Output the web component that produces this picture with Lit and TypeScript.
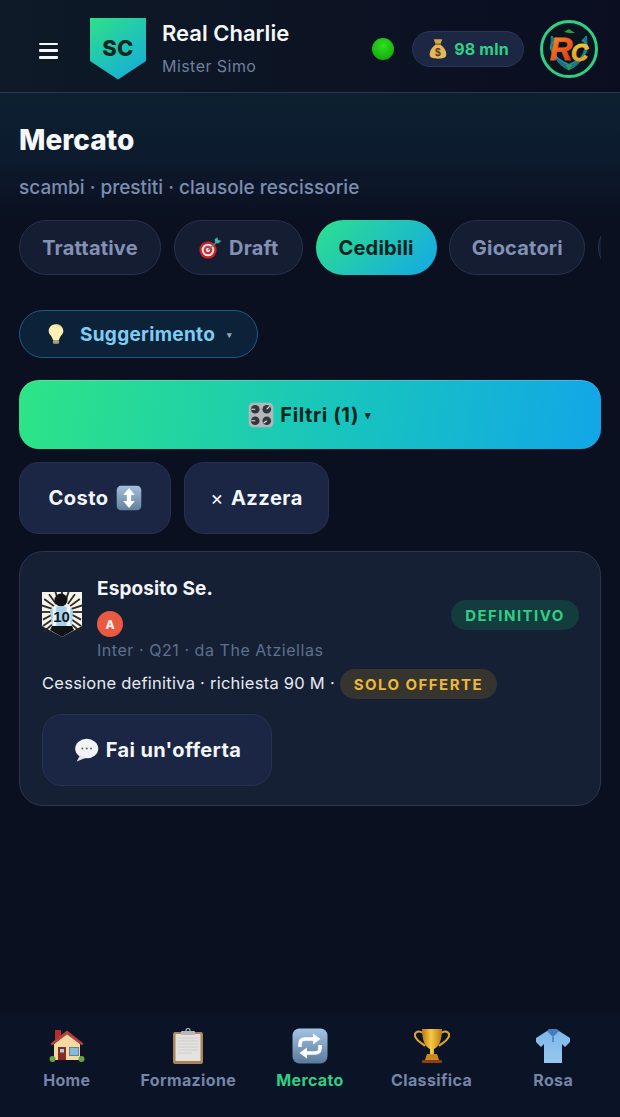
import { LitElement, html, css, svg } from "lit";
import { customElement } from "lit/decorators.js";

const ic = (size: number, body: unknown, vb = "0 0 36 36") =>
  html`<svg class="ic" width=${size} height=${size} viewBox=${vb}>${body}</svg>`;

const bag = svg`
  <path d="M11 2 L25 2 L22 10 L14 10 Z" fill="#d9a845"/>
  <rect x="13.5" y="9" width="9" height="3" rx="1" fill="#8a5a1c"/>
  <path d="M14 11 C6 16 3 25 5 30 C7 35 29 35 31 30 C33 25 30 16 22 11 Z" fill="#e3b85c"/>
  <text x="18" y="30" text-anchor="middle" font-family="Liberation Sans" font-weight="700" font-size="17" fill="#5a3c12">$</text>`;

const target = svg`
  <ellipse cx="15" cy="21" rx="13" ry="13" fill="#c8202a"/>
  <ellipse cx="15" cy="21" rx="9.5" ry="9.5" fill="#f3e6e0"/>
  <ellipse cx="15" cy="21" rx="6.5" ry="6.5" fill="#d22a30"/>
  <ellipse cx="15" cy="21" rx="3.2" ry="3.2" fill="#f3e6e0"/>
  <path d="M15 21 L29 8" stroke="#5d7f88" stroke-width="2.4"/>
  <path d="M26 11 L25 5 L29 2 L30 6 L35 7 L31 11 Z" fill="#3fb4a8"/>`;

const bulb = svg`
  <path d="M18 2 C10 2 6 8 6 13 C6 19 12 21 13 28 L23 28 C24 21 30 19 30 13 C30 8 26 2 18 2 Z" fill="#fdf0b4"/>
  <path d="M18 2 C24 2 29 7 29 13 C29 9 24 4 18 4 Z" fill="#e9d27a"/>
  <rect x="13" y="28" width="10" height="6" rx="2" fill="#a99e86"/>`;

const knob = (x: number, y: number, a: number) => svg`
  <circle cx=${x} cy=${y} r="6" fill="#33373d"/>
  <path d="M${x} ${y} L${x + 5.5 * Math.cos(a)} ${y + 5.5 * Math.sin(a)}" stroke="#e8e8e8" stroke-width="1.6"/>`;
const knobs = svg`
  <rect x="1" y="1" width="34" height="34" rx="6" fill="#b4b6b9"/>
  ${knob(10, 10, 3.14)}${knob(26, 10, -0.8)}${knob(10, 26, 3.14)}${knob(26, 26, 2.5)}`;

const updown = svg`
  <defs><linearGradient id="ud" x1="0" y1="0" x2="0" y2="1"><stop offset="0" stop-color="#a4bfdc"/><stop offset="1" stop-color="#64809f"/></linearGradient></defs>
  <rect x="1" y="1" width="34" height="34" rx="6" fill="url(#ud)"/>
  <path d="M18 4 L26 14 L21 14 L21 22 L26 22 L18 32 L10 22 L15 22 L15 14 L10 14 Z" fill="#fff"/>`;

const speech = svg`
  <ellipse cx="19" cy="16" rx="16" ry="13.5" fill="#f2f3f5"/>
  <path d="M10 25 L5 34 L17 29 Z" fill="#e3e5e8"/>
  <circle cx="13" cy="16" r="1.3" fill="#55595f"/><circle cx="19" cy="16" r="1.3" fill="#55595f"/><circle cx="25" cy="16" r="1.3" fill="#55595f"/>`;

const house = svg`
  <rect x="6" y="2" width="6" height="10" fill="#b32e2c"/>
  <path d="M5 16 L18 5 L31 16 L31 32 L5 32 Z" fill="#f4d9a2"/>
  <path d="M1.5 15.5 L18 2.5 L34.5 15.5 L33 17.5 L18 6.5 L3 17.5 Z" fill="#b5413a"/>
  <rect x="9" y="19" width="8" height="13" fill="#8a2a22"/>
  <rect x="11" y="21" width="4" height="3.5" fill="#9ed0e8"/>
  <rect x="20" y="19" width="10" height="9" fill="#6b7f8e"/><rect x="21" y="20" width="8" height="7" fill="#7fbde0"/>
  <circle cx="3.5" cy="31" r="3" fill="#6aa33f"/><circle cx="32.5" cy="31" r="3" fill="#6aa33f"/>`;

const clipboard = svg`
  <rect x="3" y="4" width="30" height="32" rx="2" fill="#a9835a"/>
  <rect x="5.5" y="6" width="25" height="27" fill="#e4e2de"/>
  <path d="M8 10h20M8 13h20M8 16h20M8 19h20M8 22h20M8 25h14" stroke="#cfcdc9" stroke-width="1.2"/>
  <rect x="11" y="3" width="14" height="4" rx="1" fill="#b8b8bc"/>
  <circle cx="18" cy="2.5" r="2" fill="none" stroke="#b8b8bc" stroke-width="1.2"/>`;

const repeat = svg`
  <defs><linearGradient id="rp" x1="0" y1="0" x2="0" y2="1"><stop offset="0" stop-color="#a4c4e6"/><stop offset="1" stop-color="#5b7b9b"/></linearGradient></defs>
  <rect x="0.5" y="0.5" width="35" height="35" rx="7" fill="url(#rp)"/>
  <path d="M8 19 L8 16 C8 12.5 10 11 13 11 L22 11" fill="none" stroke="#fff" stroke-width="3.6"/>
  <path d="M21 5.5 L28.5 11 L21 16.5 Z" fill="#fff"/>
  <path d="M28 17 L28 20 C28 23.5 26 25 23 25 L14 25" fill="none" stroke="#fff" stroke-width="3.6"/>
  <path d="M15 19.5 L7.5 25 L15 30.5 Z" fill="#fff"/>`;

const trophy = svg`
  <defs><linearGradient id="tr" x1="0" y1="0" x2="1" y2="0"><stop offset="0" stop-color="#b87a10"/><stop offset=".45" stop-color="#f7ca45"/><stop offset="1" stop-color="#b87a10"/></linearGradient></defs>
  <path d="M9 5 C3 1 -1 6 2 10 C4 14 8 15 11 18" fill="none" stroke="#e0a52a" stroke-width="2"/>
  <path d="M27 5 C33 1 37 6 34 10 C32 14 28 15 25 18" fill="none" stroke="#e0a52a" stroke-width="2"/>
  <path d="M8 1 L28 1 C28 12 25 19 20 21 L20 27 L16 27 L16 21 C11 19 8 12 8 1 Z" fill="url(#tr)"/>
  <path d="M13 26 L23 26 L25 32 L11 32 Z" fill="#c98a1c"/>
  <rect x="8" y="32" width="20" height="3" rx="1" fill="#8f3d12"/>`;

const shirt = svg`
  <defs><linearGradient id="sh" x1="0" y1="0" x2="0" y2="1"><stop offset="0" stop-color="#7fb8ea"/><stop offset="1" stop-color="#96c8ef"/></linearGradient></defs>
  <path d="M12 3 L1 10 L1 14 L6 19 L9 16 L9 35 L27 35 L27 16 L30 19 L35 14 L35 10 L24 3 Z" fill="url(#sh)"/>
  <path d="M12 3 L18 9 L24 3 L22 1 L14 1 Z" fill="#3f7fbe"/>
  <path d="M18 9 L18 14" stroke="#3f7fbe" stroke-width="1.5"/>`;

const rays = Array.from({ length: 11 }, (_, i) => {
  const a = Math.PI + (i * Math.PI) / 10;
  const c = Math.cos(a), s = Math.sin(a);
  return svg`<path d="M${20 + 10 * c} ${20 + 10 * s} L${20 + 22 * c} ${20 + 22 * s}" stroke="#2c281e" stroke-width="1.8"/>`;
});
const rays2 = [0.2, 0.55, 0.9].flatMap((d) => [
  svg`<path d="M10 ${20 + d * 14} L1 ${24 + d * 18}" stroke="#2c281e" stroke-width="1.8"/>`,
  svg`<path d="M30 ${20 + d * 14} L39 ${24 + d * 18}" stroke="#2c281e" stroke-width="1.8"/>`,
]);

const clubLogo = html`<svg class="club" width="40" height="46" viewBox="0 0 40 46">
  <path d="M0 0 H40 V34 L20 45 L0 34 Z" fill="#f6f3ec"/>
  ${rays}${rays2}
  <circle cx="19" cy="8" r="6.5" fill="#101216"/>
  <path d="M8 18 C11 13 27 13 31 18 L30 34 L10 34 Z" fill="#a5d2ea"/>
  <path d="M12.5 15 V34 M26.5 15 V34" stroke="#eef6fa" stroke-width="3.5"/>
  <text x="19.5" y="30" text-anchor="middle" font-family="Liberation Sans" font-weight="700" font-size="15" fill="#14181e">10</text>
  <path d="M10 34 H30 L32 38 L20 45 L8 38 Z" fill="#101216"/>
</svg>`;

const feathers = [0, 1, 2, 3, 4].map((i) => svg`
  <path d="M30 ${50 - i} C${20 - i * 2} ${46 - i * 2} ${11 - i} ${34 - i * 2} ${13 + i} ${17 + i}" fill="none" stroke=${i % 2 ? "#1a5f86" : "#1f8a90"} stroke-width="2"/>
  <path d="M30 ${50 - i} C${40 + i * 2} ${46 - i * 2} ${49 + i} ${34 - i * 2} ${47 - i} ${17 + i}" fill="none" stroke=${i % 2 ? "#1a5f86" : "#1f8a90"} stroke-width="2"/>`);

const avatar = html`<svg class="avatar" width="60" height="60" viewBox="0 0 60 60">
  <defs>
    <linearGradient id="rcg" x1="0" y1="0" x2="0.6" y2="1"><stop offset="0" stop-color="#f79a28"/><stop offset=".55" stop-color="#f0601c"/><stop offset="1" stop-color="#d93a18"/></linearGradient>
    <linearGradient id="ccg" x1="0" y1="0" x2="0" y2="1"><stop offset="0" stop-color="#f5cb3a"/><stop offset="1" stop-color="#dd9a22"/></linearGradient>
  </defs>
  <circle cx="30" cy="30" r="27.5" fill="#0a141e" stroke="#2fd085" stroke-width="3"/>
  ${feathers}
  <path d="M25 13 L30 10 L36 14 L30 14 Z" fill="#2f9a4a"/>
  <path d="M27 46 L30 52 L33 46 Z" fill="#2f9a4a"/>
  <text x="32" y="42" font-family="Liberation Sans" font-style="italic" font-weight="700" font-size="24" fill="url(#ccg)" stroke="url(#ccg)" stroke-width=".8">C</text>
  <text x="11" y="41" font-family="Liberation Sans" font-style="italic" font-weight="700" font-size="31" fill="url(#rcg)" stroke="url(#rcg)" stroke-width=".8">R</text>
</svg>`;

@customElement("app-root")
export class AppRoot extends LitElement {
  static styles = css`
    :host { display: flex; flex-direction: column; min-height: 100vh; background: #0a1020; color: #f3f6fb;
      font-family: Inter, "Noto Sans", "Liberation Sans", sans-serif; }
    * { box-sizing: border-box; }
    .ic, .club, .avatar { display: block; flex: none; }

    .top { height: 93px; display: flex; align-items: center; border-bottom: 1px solid #2b3650;
      background: linear-gradient(90deg, #0e1a28 0%, #0c1424 50%, #0a0e20 100%); padding: 6px 21px 0 39px; }
    .burger { width: 19px; height: 16px; display: flex; flex-direction: column; justify-content: space-between; margin-top: 3px; }
    .burger i { display: block; height: 2.6px; background: #f6f7fa; border-radius: 1px; }
    .shield { width: 56px; height: 62px; margin: -1px 0 0 32px; display: flex; align-items: center; justify-content: center;
      background: linear-gradient(145deg, #2ee08a, #13a8e0); clip-path: polygon(0 0, 100% 0, 100% 70%, 50% 100%, 0 70%);
      color: #07281f; font-size: 22px; font-weight: 800; padding-bottom: 2px; letter-spacing: .4px; }
    .who { margin-left: 16px; display: flex; flex-direction: column; gap: 9px; flex: 1; margin-top: -4px; }
    .who b { font-size: 22px; line-height: 28px; font-weight: 600; color: #f4f6fb; }
    .who span { font-size: 16px; line-height: 20px; color: #6f7f9e; letter-spacing: .45px; }
    .dot { width: 22px; height: 22px; border-radius: 50%; background: radial-gradient(circle at 50% 35%, #2ee01c, #0c9e0c); margin-right: 18px; margin-top: -1px; }
    .money { width: 112px; height: 36px; border-radius: 18px; background: #1b2743; border: 1px solid #2a3654;
      display: flex; align-items: center; justify-content: center; gap: 5px; color: #2fd085; font-weight: 700; font-size: 16px; margin-right: 15px; margin-top: -1px; letter-spacing: .2px; }
    .avatar { margin-top: -1px; }

    .hero { padding: 30px 19px 0; height: 127px; background: linear-gradient(180deg, #0c2030 0%, #0c1b2e 50%, #0a1020 100%); }
    h1 { margin: 0; font-size: 28px; line-height: 34px; font-weight: 800; color: #f6f8fc; }
    .sub { margin-top: 19px; font-size: 19px; line-height: 24px; color: #7c8daf; font-weight: 500; white-space: nowrap; }

    .main { flex: 1; padding: 0 19px; }
    .tabs { display: flex; gap: 12.8px; overflow: hidden; }
    .tab { flex: none; height: 55px; border-radius: 28px; border: 1px solid #27324d; background: #151d33; color: #8391b3;
      font-size: 20px; font-weight: 700; display: flex; align-items: center; justify-content: center; gap: 7px; letter-spacing: .2px; }
    .tab.on { background: linear-gradient(135deg, #2ee08a, #13a8e8); border: 0; color: #07231f; }

    .hint { margin-top: 35px; width: 239px; height: 48px; border-radius: 24px; border: 1px solid #1f5a7e; background: #0c2238;
      display: flex; align-items: center; color: #7dcdf5; font-size: 19px; font-weight: 700; padding-left: 25px; gap: 13px; letter-spacing: .3px; }
    .hint small { font-size: 9px; color: #8fa6bd; margin-left: -1px; }

    .filters { margin-top: 22px; height: 69px; border-radius: 20px; display: flex; align-items: center; justify-content: center; gap: 6px;
      background: linear-gradient(100deg, #2ee486 0%, #17c5bd 55%, #12a6e8 100%); color: #08251f; font-size: 20px; font-weight: 700; letter-spacing: .6px;
      box-shadow: inset 0 1px 0 rgba(255, 255, 255, .18); }
    .filters small { font-size: 11px; margin-left: 0; }

    .tools { margin-top: 13px; display: flex; gap: 13px; }
    .btn { height: 72px; border-radius: 20px; background: #1a2644; border: 1px solid #27324f; color: #f3f6fb;
      display: flex; align-items: center; justify-content: center; gap: 7px; font-size: 20px; font-weight: 700; letter-spacing: .5px; }
    .btn.cost { width: 152px; }
    .btn.reset { width: 145px; }
    .btn .x { font-weight: 400; font-size: 20px; }

    .card { margin-top: 17px; height: 255px; border-radius: 24px; background: #162035; border: 1px solid #2a3550; padding: 24px 21px 19px 22px; }
    .row1 { display: flex; align-items: center; }
    .club { margin-right: 15px; margin-top: -8px; }
    .info { flex: 1; display: flex; flex-direction: column; align-items: flex-start; }
    .name { font-size: 19px; line-height: 26px; font-weight: 700; color: #f3f6fb; letter-spacing: .1px; }
    .role { margin-top: 9px; width: 26px; height: 26px; border-radius: 50%; background: #ea5a42; color: #fbf1ee; font-size: 12px; font-weight: 800;
      display: flex; align-items: center; justify-content: center; }
    .meta { margin-top: 2px; font-size: 16px; line-height: 22px; color: #5f6f8e; letter-spacing: .55px; }
    .tag { border-radius: 15px; height: 30px; display: inline-flex; align-items: center; font-size: 15px; font-weight: 700; letter-spacing: 1.45px; }
    .tag.def { width: 128px; justify-content: center; background: #123c3e; color: #2fd085; margin-top: -7px; }
    .tag.solo { width: 157px; justify-content: center; background: #36342f; color: #edb837; margin-left: 5px; position: relative; top: 1px; }
    .row2 { margin-top: 7px; display: flex; align-items: center; font-size: 16.5px; color: #e6eaf2; white-space: nowrap; height: 30px; letter-spacing: .25px; }
    .offer { margin-top: 16px; width: 230px; height: 72px; border-radius: 20px; background: #1a2644; border: 1px solid #27324f; font-size: 20px; font-weight: 700;
      display: flex; align-items: center; justify-content: center; gap: 7px; color: #f3f6fb; letter-spacing: .35px; }

    .nav { height: 112px; background: linear-gradient(180deg, #0a1020 0%, #0b1326 14%, #0b1326 100%); display: flex; padding: 0 6px; }
    .item { flex: 1; display: flex; flex-direction: column; align-items: center; padding-top: 23px; color: #7685a8; font-size: 16px; font-weight: 700; gap: 6px; letter-spacing: .35px; }
    .item.on { color: #2fd085; }
    .item span { line-height: 20px; white-space: nowrap; }
  `;

  render() {
    return html`
      <header class="top">
        <div class="burger"><i></i><i></i><i></i></div>
        <div class="shield">SC</div>
        <div class="who"><b>Real Charlie</b><span>Mister Simo</span></div>
        <div class="dot"></div>
        <div class="money">${ic(22, bag)}<span>98 mln</span></div>
        ${avatar}
      </header>
      <section class="hero">
        <h1>Mercato</h1>
        <div class="sub">scambi · prestiti · clausole rescissorie</div>
      </section>
      <main class="main">
        <div class="tabs">
          <div class="tab" style="width:142px">Trattative</div>
          <div class="tab" style="width:129px">${ic(24, target)}<span>Draft</span></div>
          <div class="tab on" style="width:121px">Cedibili</div>
          <div class="tab" style="width:136px">Giocatori</div>
          <div class="tab" style="width:120px"></div>
        </div>
        <div class="hint">${ic(22, bulb)}<span>Suggerimento</span><small>▾</small></div>
        <div class="filters">${ic(26, knobs)}<span>Filtri (1)</span><small>▾</small></div>
        <div class="tools">
          <div class="btn cost"><span>Costo</span>${ic(26, updown)}</div>
          <div class="btn reset"><span class="x">×</span><span>Azzera</span></div>
        </div>
        <article class="card">
          <div class="row1">
            ${clubLogo}
            <div class="info">
              <div class="name">Esposito Se.</div>
              <div class="role">A</div>
              <div class="meta">Inter · Q21 · da The Atziellas</div>
            </div>
            <div class="tag def">DEFINITIVO</div>
          </div>
          <div class="row2"><span>Cessione definitiva · richiesta 90 M ·</span><span class="tag solo">SOLO OFFERTE</span></div>
          <div class="offer">${ic(26, speech)}<span>Fai un'offerta</span></div>
        </article>
      </main>
      <nav class="nav">
        <div class="item">${ic(36, house)}<span>Home</span></div>
        <div class="item">${ic(36, clipboard)}<span>Formazione</span></div>
        <div class="item on">${ic(36, repeat)}<span>Mercato</span></div>
        <div class="item">${ic(36, trophy)}<span>Classifica</span></div>
        <div class="item">${ic(36, shirt)}<span>Rosa</span></div>
      </nav>
    `;
  }
}
